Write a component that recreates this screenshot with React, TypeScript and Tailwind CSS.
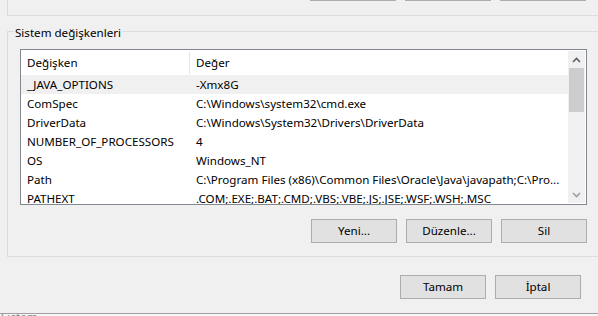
import { ReactNode } from 'react';

type Row = { name: string; value: string; selected?: boolean };

const rows: Row[] = [
  { name: '_JAVA_OPTIONS', value: '-Xmx8G', selected: true },
  { name: 'ComSpec', value: 'C:\\Windows\\system32\\cmd.exe' },
  { name: 'DriverData', value: 'C:\\Windows\\System32\\Drivers\\DriverData' },
  { name: 'NUMBER_OF_PROCESSORS', value: '4' },
  { name: 'OS', value: 'Windows_NT' },
  { name: 'Path', value: 'C:\\Program Files (x86)\\Common Files\\Oracle\\Java\\javapath;C:\\Pro...' },
  { name: 'PATHEXT', value: '.COM;.EXE;.BAT;.CMD;.VBS;.VBE;.JS;.JSE;.WSF;.WSH;.MSC' },
];

function Button({ children }: { children: ReactNode }) {
  return (
    <div className="w-[86px] h-[24px] shrink-0 border border-[#adadad] bg-[#e1e1e1] flex items-center justify-center text-black">
      {children}
    </div>
  );
}

function Chevron({ up, color }: { up?: boolean; color: string }) {
  return (
    <svg width="9" height="6" viewBox="0 0 9 6">
      <polyline
        points={up ? '1,5 4.5,1.5 8,5' : '1,1 4.5,4.5 8,1'}
        fill="none"
        stroke={color}
        strokeWidth="1.6"
      />
    </svg>
  );
}

export default function App() {
  return (
    <div
      className="w-[598px] h-[316px] overflow-hidden bg-[#f0f0f0] text-[11.6px] leading-[16px] text-black"
      style={{ fontFamily: '"Noto Sans", "Liberation Sans", sans-serif' }}
    >
      {/* previous group box, only its bottom is visible */}
      <div className="ml-[7px] mr-[-20px] h-[16px] border-l border-b border-[#dcdcdc]">
        <div className="w-[578px] flex justify-end gap-[9px]">
          <div className="w-[86px] h-[1px] bg-[#adadad]" />
          <div className="w-[86px] h-[1px] bg-[#adadad]" />
          <div className="w-[86px] h-[1px] bg-[#adadad]" />
        </div>
      </div>

      {/* Sistem değişkenleri */}
      <div className="ml-[7px] mr-[-20px] mt-[15px] border border-[#dcdcdc] pb-[13px]">
        <div className="ml-[6px] -mt-[7px] px-[1px] w-fit bg-[#f0f0f0]">Sistem değişkenleri</div>

        <div className="ml-[12px] mt-[8px] w-[567px] h-[156px] border border-[#828790] bg-white flex overflow-hidden">
          <div className="w-[547px] shrink-0 flex flex-col overflow-hidden">
            <div className="h-[25px] flex items-center shrink-0">
              <div className="w-[169px] shrink-0 h-[22px] border-r border-[#e5e5e5] pl-[6px] flex items-center">Değişken</div>
              <div className="pl-[6px]">Değer</div>
            </div>
            {rows.map((r) => (
              <div
                key={r.name}
                className={`h-[19px] shrink-0 flex items-center ${r.selected ? 'bg-[#f0f0f0]' : ''}`}
              >
                <div className="w-[169px] shrink-0 pl-[6px] whitespace-nowrap">{r.name}</div>
                <div className="pl-[6px] whitespace-nowrap">{r.value}</div>
              </div>
            ))}
          </div>

          {/* scrollbar */}
          <div className="w-[17px] shrink-0 my-[1px] bg-[#f0f0f0] flex flex-col">
            <div className="h-[17px] flex items-center justify-center">
              <Chevron up color="#606060" />
            </div>
            <div className="mx-[1px] h-[44px] bg-[#cdcdcd]" />
            <div className="flex-1" />
            <div className="h-[17px] flex items-center justify-center">
              <Chevron color="#a0a0a0" />
            </div>
          </div>
        </div>

        <div className="ml-[12px] mt-[14px] w-[567px] flex justify-end gap-[9px]">
          <Button>Yeni...</Button>
          <Button>Düzenle...</Button>
          <Button>Sil</Button>
        </div>
      </div>

      {/* dialog buttons */}
      <div className="mt-[18px] w-[581px] flex justify-end gap-[9px]">
        <Button>Tamam</Button>
        <Button>İptal</Button>
      </div>

      <div className="mt-[14px] h-[1px] bg-[#a0a0a0]" />
      <div className="h-[2px] overflow-hidden bg-[#f7f7f7]">
        <div className="-mt-[3px] pl-[1px] text-[#8a8a8a] leading-[12px]">Sistem</div>
      </div>
    </div>
  );
}
